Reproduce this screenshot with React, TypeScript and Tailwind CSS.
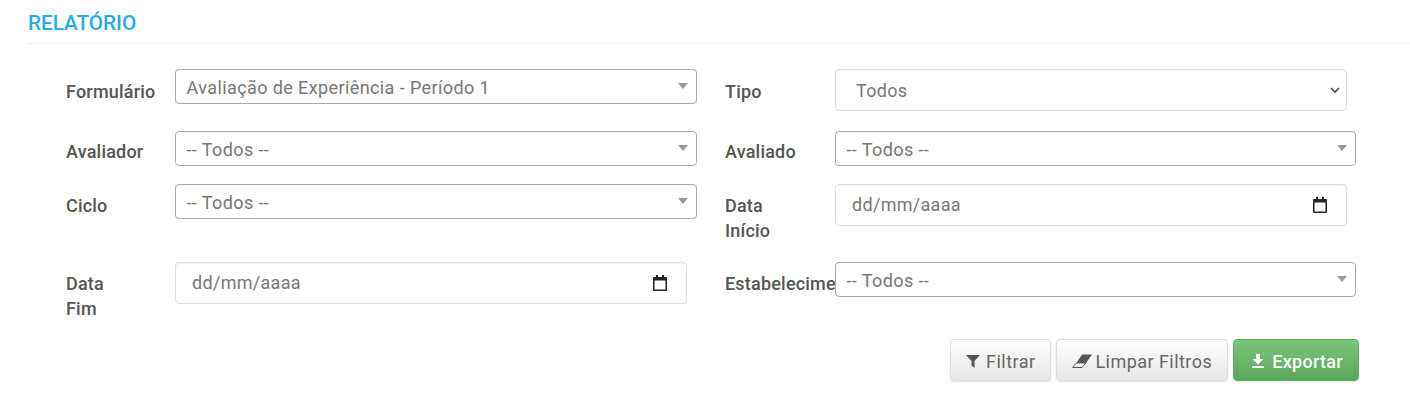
import React from "react";

function Label({ wide, pad = "pt-[9px]", children }: { wide?: boolean; pad?: string; children: React.ReactNode }) {
  return (
    <label className={`${wide ? "w-[110px]" : "w-[109px]"} ${pad} shrink-0 overflow-hidden text-[18px] leading-[25px] font-medium tracking-[0.2px] text-[#555]`}>
      {children}
    </label>
  );
}

function Select2({ value, narrow }: { value: string; narrow?: boolean }) {
  return (
    <div className={`${narrow ? "w-[521px]" : "w-[522px]"} flex h-[35px] shrink-0 items-center justify-between rounded border border-[#aaa] bg-white pl-[10.5px] pr-[8px]`}>
      <span className="pt-[2px] text-[18px] leading-[28px] tracking-[0.4px] text-[#777]">{value}</span>
      <span className="mb-[1px] h-0 w-0 border-x-[5px] border-t-[6px] border-x-transparent border-t-[#999]" />
    </div>
  );
}

function DateField() {
  return (
    <div className="flex h-[42px] w-[512px] shrink-0 items-center justify-between rounded border border-[#ddd] bg-white pl-[16px] pr-[19px] shadow-[inset_0_1px_1px_rgba(0,0,0,0.05)]">
      <span className="pb-[2px] text-[18px] tracking-[0.3px] text-[#777]">dd/mm/aaaa</span>
      <svg width="14" height="16" viewBox="0 0 14 16" className="mb-[1px]" fill="none">
        <path d="M3 0h2v2h4V0h2v2h2a1 1 0 0 1 1 1v12a1 1 0 0 1-1 1H1a1 1 0 0 1-1-1V3a1 1 0 0 1 1-1h2z" fill="#222" />
        <rect x="1.5" y="5.5" width="11" height="9" fill="#fff" />
      </svg>
    </div>
  );
}

const btn = "flex h-[42px] items-center rounded border pt-[2px] text-[18px] shadow-[0_1px_2px_rgba(0,0,0,0.12)]";

export default function App() {
  return (
    <div className="min-h-[403px] bg-white font-['Roboto',sans-serif]">
      <div className="ml-[28px] flex h-[44px] items-start border-b border-[#eee] pt-[11px]">
        <h2 className="text-[20.7px] leading-[24px] font-medium text-[#29abe2]">RELATÓRIO</h2>
      </div>

      <div className="pl-[66px] pt-[25px]">
        <div className="flex h-[62px] items-start">
          <div className="flex w-[659px]">
            <Label pad="pt-[10px]">Formulário</Label>
            <Select2 value="Avaliação de Experiência - Período 1" />
          </div>
          <div className="flex">
            <Label wide pad="pt-[10px]">Tipo</Label>
            <div className="flex h-[42px] w-[512px] shrink-0 items-center justify-between rounded border border-[#ddd] bg-white pl-[20px] pr-[6px] text-[18px] tracking-[0.3px] text-[#777] shadow-[inset_0_1px_1px_rgba(0,0,0,0.05)]">
              <span>Todos</span>
              <svg width="10" height="7" viewBox="0 0 10 7" fill="none">
                <path d="M1 1l4 4 4-4" stroke="#444" strokeWidth="1.6" />
              </svg>
            </div>
          </div>
        </div>

        <div className="flex h-[53px] items-start">
          <div className="flex w-[659px]">
            <Label pad="pt-[8px]">Avaliador</Label>
            <Select2 value="-- Todos --" />
          </div>
          <div className="flex">
            <Label wide pad="pt-[8px]">Avaliado</Label>
            <Select2 narrow value="-- Todos --" />
          </div>
        </div>

        <div className="flex h-[78px] items-start">
          <div className="flex w-[659px]">
            <Label>Ciclo</Label>
            <Select2 value="-- Todos --" />
          </div>
          <div className="flex">
            <Label wide>Data<br />Início</Label>
            <DateField />
          </div>
        </div>

        <div className="flex h-[77px] items-start">
          <div className="flex w-[659px]">
            <Label>Data<br />Fim</Label>
            <DateField />
          </div>
          <div className="flex">
            <Label wide><span className="whitespace-nowrap">Estabelecimento</span></Label>
            <Select2 narrow value="-- Todos --" />
          </div>
        </div>

        <div className="flex w-[1293px] justify-end gap-[5px]">
          <button className={`${btn} border-[#ddd] bg-gradient-to-b from-white to-[#e6e6e6] pl-[15px] pr-[15px] tracking-[0.45px] text-[#666]`}>
            <svg width="14" height="14" viewBox="0 0 14 14" className="mr-[6px]">
              <path d="M0 1h14L8.5 7v7l-3-2.5V7z" fill="#555" />
            </svg>
            Filtrar
          </button>
          <button className={`${btn} border-[#ddd] bg-gradient-to-b from-white to-[#e6e6e6] pl-[15px] pr-[15px] tracking-[0.45px] text-[#666]`}>
            <svg width="20" height="14" viewBox="0 0 20 14" className="mr-[3px]">
              <path d="M10 0.5H20L14 9H4.5z" fill="#555" />
              <path d="M4.5 9H14L10 13.5H0.5z" fill="#fff" stroke="#555" strokeWidth="1" />
            </svg>
            Limpar Filtros
          </button>
          <button className={`${btn} border-[#5cb25c] bg-gradient-to-b from-[#7cc47c] to-[#5ca65c] pl-[18px] pr-[15px] font-medium tracking-[0.3px] text-white`}>
            <svg width="12" height="14" viewBox="0 0 12 14" className="mr-[8px]">
              <path d="M4 0h4v5h3.5L6 10.5 0.5 5H4zM0 12h12v2H0z" fill="#fff" />
            </svg>
            Exportar
          </button>
        </div>
      </div>
    </div>
  );
}
